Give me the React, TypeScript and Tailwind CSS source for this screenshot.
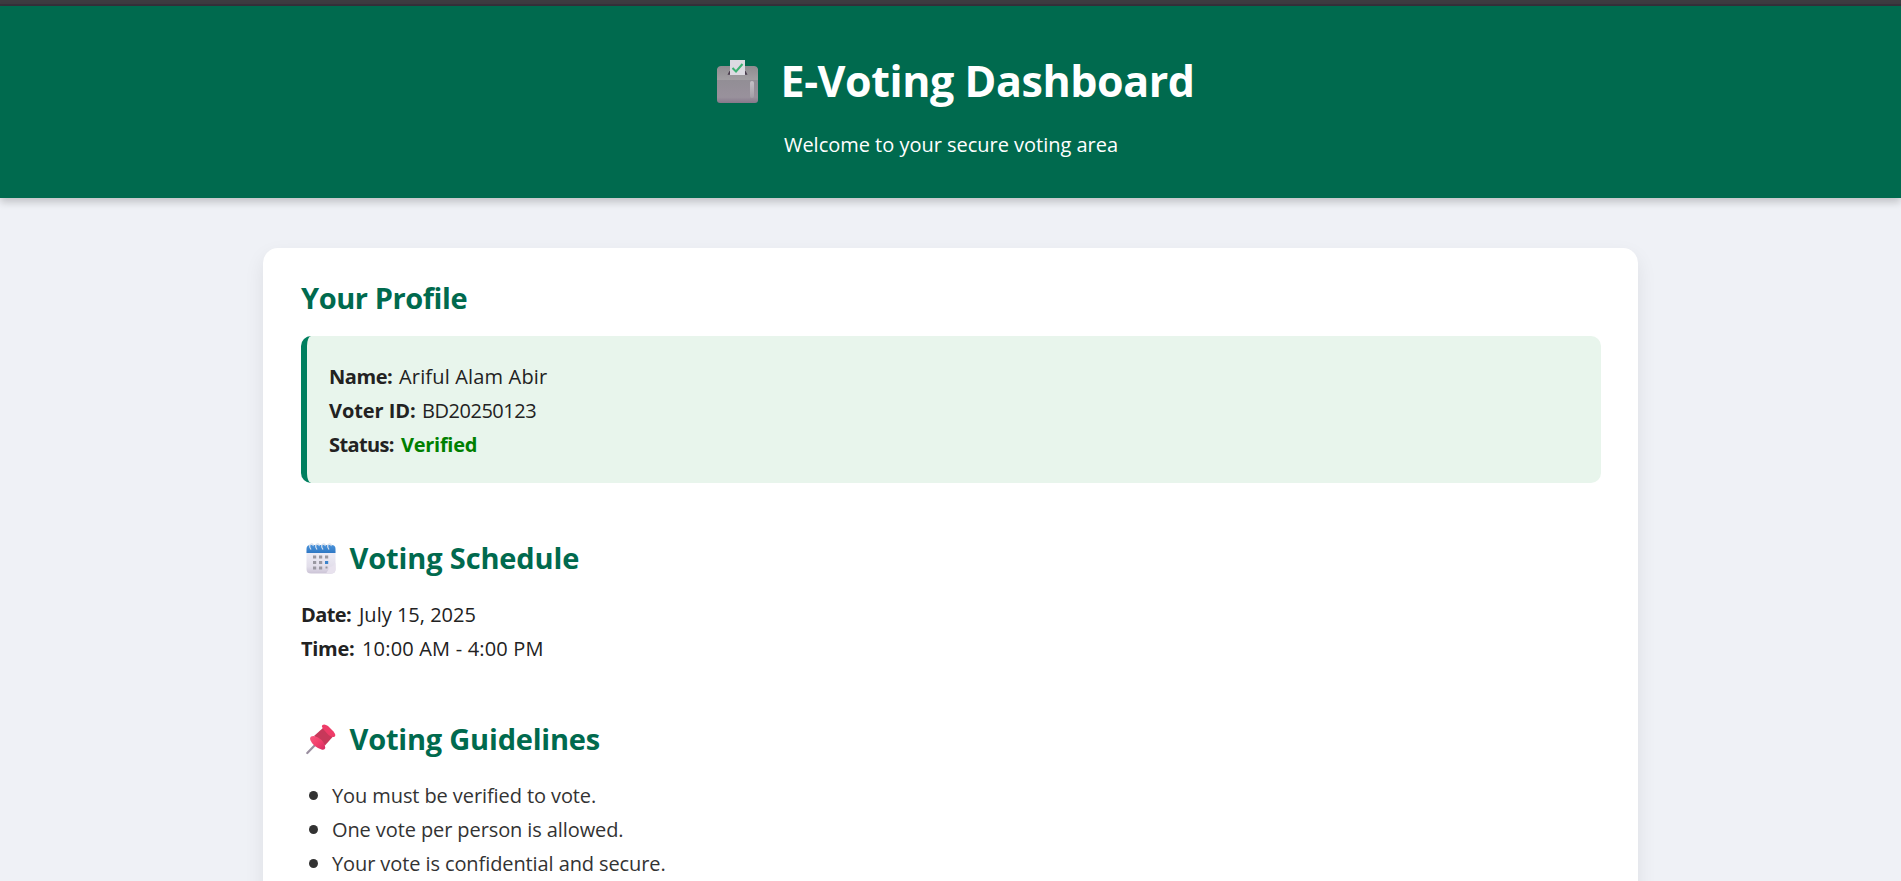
import type { ReactNode } from 'react';

function BallotBox() {
  return (
    <svg className="mt-[2px] h-[44px] w-[42px] shrink-0" viewBox="0 0 42 44">
      <defs>
        <linearGradient id="bbTop" x1="0" y1="0" x2="0" y2="1">
          <stop offset="0" stopColor="#8f8c90" />
          <stop offset="1" stopColor="#a29fa3" />
        </linearGradient>
        <linearGradient id="bbFront" x1="0" y1="0" x2="0" y2="1">
          <stop offset="0" stopColor="#928e95" />
          <stop offset="0.75" stopColor="#99919c" />
          <stop offset="1" stopColor="#85788a" />
        </linearGradient>
        <linearGradient id="bbShine" x1="0" y1="0" x2="0" y2="1">
          <stop offset="0" stopColor="#c4c1c6" />
          <stop offset="1" stopColor="#a39da6" />
        </linearGradient>
      </defs>
      <path d="M4 6H37Q40 6 41 9V20H0V9Q1 6 4 6Z" fill="url(#bbTop)" />
      <path d="M0 20H41V40Q41 43 38 43H3Q0 43 0 40Z" fill="url(#bbFront)" />
      <path d="M12.500 11H28.500L30.500 14.800H10.500Z" fill="#493c4c" />
      <path d="M13 0H28V15H13Z" fill="#dddbe2" />
      <path d="M15.500 8L19 11.500L25.500 4" fill="none" stroke="#3cb272" strokeWidth="2" />
      <rect x="33" y="21" width="4" height="17" rx="2" fill="url(#bbShine)" />
    </svg>
  );
}

function Calendar() {
  return (
    <svg className="h-[31px] w-[30px] shrink-0" viewBox="0 0 30 31">
      <defs>
        <linearGradient id="calPage" x1="0" y1="0" x2="0" y2="1">
          <stop offset="0" stopColor="#efeef7" />
          <stop offset="0.7" stopColor="#e2deea" />
          <stop offset="1" stopColor="#cbc3d6" />
        </linearGradient>
        <linearGradient id="calHead" x1="0" y1="0" x2="0" y2="1">
          <stop offset="0" stopColor="#4a93db" />
          <stop offset="1" stopColor="#2f78c4" />
        </linearGradient>
      </defs>
      <path d="M0.500 8H29.500V26Q29.500 30.500 25 30.500H5Q0.500 30.500 0.500 26Z" fill="url(#calPage)" />
      <path d="M0.500 10V6Q0.500 2 4.500 2H25.500Q29.500 2 29.500 6V10Z" fill="url(#calHead)" />
      <path d="M5 6.500Q2 2 5.500 0.800Q7.500 1 7 3M11 6.500Q8 2 11.500 0.800Q13.500 1 13 3M17 6.500Q14 2 17.500 0.800Q19.500 1 19 3M23 6.500Q20 2 23.500 0.800Q25.500 1 25 3" fill="none" stroke="#d3ddeb" strokeWidth="1.300" />
      <path d="M7 12.500h3.200v3h-3.200zM13 12.500h3.200v3h-3.200zM19 12.500h3.200v3h-3.200zM7 18h3.200v3h-3.200zM13 18h3.200v3h-3.200zM7 23.500h3.200v3h-3.200zM13 23.500h3.200v3h-3.200z" fill="#9a98a1" />
      <path d="M19 18h3.200v3h-3.200z" fill="#3b83ca" />
      <path d="M19.500 23.500h2v2h-2z" fill="#96949e" />
      <path d="M20 30.500Q23 27 23 24Q27 24 29.500 20V26Q29.500 30.500 25 30.500Z" fill="#e8e2ee" />
    </svg>
  );
}

function Pushpin() {
  return (
    <svg className="h-[31px] w-[30px] shrink-0" viewBox="0 0 30 31">
      <defs>
        <linearGradient id="pinBase" x1="0" y1="0" x2="1" y2="1">
          <stop offset="0" stopColor="#f8597f" />
          <stop offset="0.5" stopColor="#f2406c" />
          <stop offset="1" stopColor="#d52a62" />
        </linearGradient>
      </defs>
      <path d="M11 19L1.300 29" stroke="#9a8fa0" strokeWidth="2.200" strokeLinecap="round" />
      <path d="M17.500 3.500L27 12.500L19 21.500L8 12Z" fill="#c7385a" />
      <path d="M5 12.500Q8 11 12 13.500Q19 17.500 19.300 24Q18.500 26.500 15.500 25.500Q7 22.500 4.300 16Q3.500 13.500 5 12.500Z" fill="url(#pinBase)" />
      <path d="M16.500 1Q18.500 -0.500 22 2L27.500 7.500Q30.500 11.500 28.500 12.800Q26 13.800 22.500 11L18 6Q15 2.500 16.500 1Z" fill="#ee3c68" />
    </svg>
  );
}

function SectionTitle({ icon, children }: { icon?: ReactNode; children: ReactNode }) {
  return (
    <h2 className="flex h-10 items-center text-[29px] leading-10 font-bold whitespace-nowrap text-[#006a4e]">
      {icon && <span className="mr-[13.500px] ml-[5px] flex">{icon}</span>}
      {children}
    </h2>
  );
}

export default function App() {
  return (
    <div className="h-[881px] overflow-hidden bg-[#eff1f6] font-['Open_Sans','Noto_Sans',sans-serif] text-[20px] leading-[34px] whitespace-nowrap text-[#222]">
      <div className="h-[6px] border-b-2 border-[#35313a] bg-[#3d3b40]" />
      <header className="flex h-[192px] flex-col items-center bg-[#006a4e] pt-[45px] text-white shadow-[0_4px_8px_rgba(0,0,0,0.2)]">
        <h1 className="flex h-[60px] w-[476px] items-center pl-[4px] text-[43px] leading-[60px] font-bold tracking-[-0.439px]">
          <BallotBox />
          <span className="ml-[22px]">E-Voting Dashboard</span>
        </h1>
        <p className="mt-[17px] pl-px tracking-[-0.018px]">Welcome to your secure voting area</p>
      </header>

      <main className="mx-auto mt-[50px] h-[760px] w-[1375px] rounded-[15px] bg-white pt-[30px] pr-[37px] pl-[38px] shadow-[0_8px_20px_rgba(0,0,0,0.08)]">
        <section>
          <SectionTitle><span className="tracking-[-0.424px]">Your Profile</span></SectionTitle>
          <div className="mt-[18px] h-[147px] rounded-[10px] border-l-[6px] border-[#007f5f] bg-[#e8f5ec] pt-[24px] pl-[22px]">
            <p className="flex">
              <strong className="w-[70px] tracking-[-0.449px]">Name:</strong>
              <span className="tracking-[0.163px]">Ariful Alam Abir</span>
            </p>
            <p className="flex">
              <strong className="w-[93px] tracking-[-0.073px]">Voter ID:</strong>
              <span className="tracking-[-0.470px]">BD20250123</span>
            </p>
            <p className="flex">
              <strong className="w-[72px] tracking-[-0.620px]">Status:</strong>
              <strong className="tracking-[-0.279px] text-[#008000]">Verified</strong>
            </p>
          </div>
        </section>

        <section className="mt-[55px]">
          <SectionTitle icon={<Calendar />}><span className="tracking-[-0.132px]">Voting Schedule</span></SectionTitle>
          <div className="mt-[20px]">
            <p className="flex">
              <strong className="w-[58px] tracking-[-0.600px]">Date:</strong>
              <span className="tracking-[0.000px]">July 15, 2025</span>
            </p>
            <p className="flex">
              <strong className="w-[61px] tracking-[-0.300px]">Time:</strong>
              <span className="tracking-[0.180px]">10:00 AM - 4:00 PM</span>
            </p>
          </div>
        </section>

        <section className="mt-[53px]">
          <SectionTitle icon={<Pushpin />}><span className="tracking-[-0.200px]">Voting Guidelines</span></SectionTitle>
          <ul className="mt-[20px] text-[#333]">
            <li className="flex items-center">
              <span className="mr-[14px] ml-[8px] size-[9px] -translate-y-px rounded-full bg-[#333]" />
              <span className="tracking-[-0.093px]">You must be verified to vote.</span>
            </li>
            <li className="flex items-center">
              <span className="mr-[14px] ml-[8px] size-[9px] -translate-y-px rounded-full bg-[#333]" />
              <span className="tracking-[-0.100px]">One vote per person is allowed.</span>
            </li>
            <li className="flex items-center">
              <span className="mr-[14px] ml-[8px] size-[9px] -translate-y-px rounded-full bg-[#333]" />
              <span className="tracking-[-0.096px]">Your vote is confidential and secure.</span>
            </li>
          </ul>
        </section>
      </main>
    </div>
  );
}
